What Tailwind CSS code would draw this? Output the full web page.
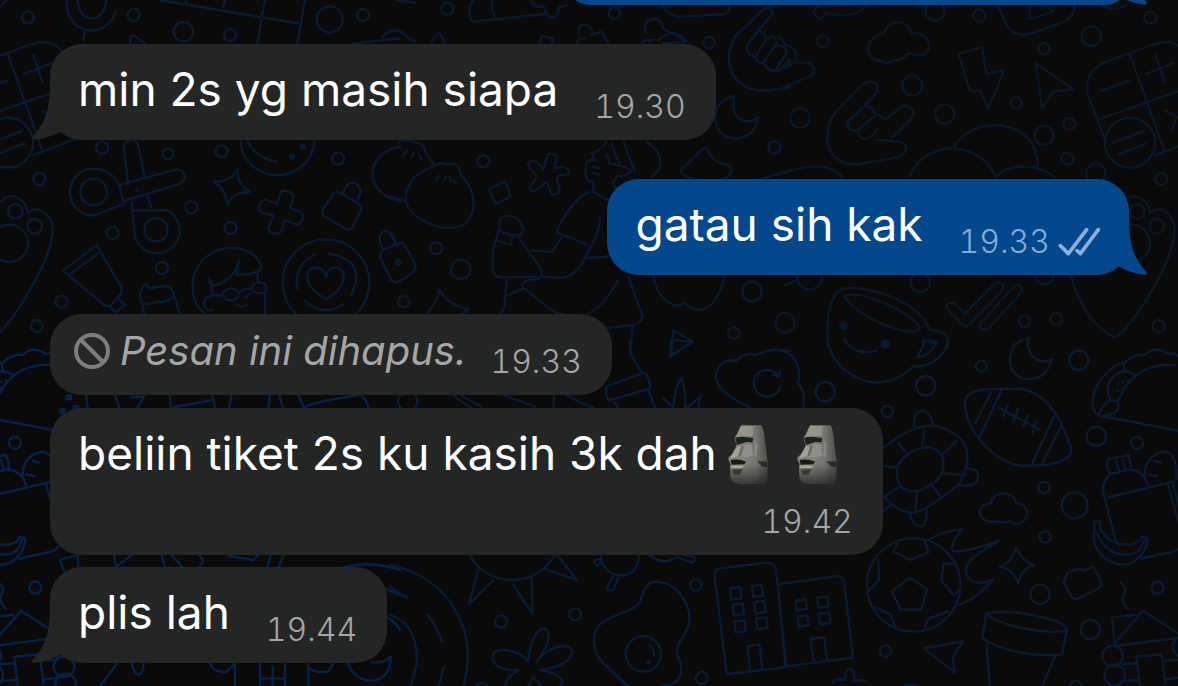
<!DOCTYPE html>
<html lang="id">
<head>
<meta charset="utf-8">
<meta name="viewport" content="width=device-width, initial-scale=1">
<title>Chat</title>
<script src="https://cdn.jsdelivr.net/npm/@tailwindcss/browser@4"></script>
</head>
<body class="bg-[#0a0a0a]">
<main class="relative min-h-screen overflow-hidden bg-[#0a0a0a] font-['Inter','Liberation_Sans',sans-serif] text-white">

<!-- Doodle wallpaper -->
<svg class="absolute top-0 left-0 h-[686px] w-[1178px]" viewBox="0 0 1178 686" fill="none" stroke="currentColor" stroke-width="7" stroke-linecap="round" stroke-linejoin="round" aria-hidden="true">
  <defs>
    <g id="edge-top" transform="translate(778 0) scale(.33333)">
      <circle cx="1116" cy="53" r="18"/><circle cx="1150" cy="537" r="18"/><circle cx="1142" cy="978" r="18"/>
      <path d="M983 425L930 285Q915 215 985 185L1120 135Q1190 110 1220 157L1290 350Q1310 400 1245 422L1133 465M1055 160L1160 455M965 357L1245 258M970 273L1053 242M1103 222L1187 190M1132 165L1160 247M1160 333L1210 357M1180 393L1196 352"/>
      <circle cx="1056" cy="428" r="75"/>
      <path d="M1005 428L1095 394M1020 464L1104 431"/>
      <circle cx="1078" cy="634" r="22"/><circle cx="1136" cy="679" r="22"/><circle cx="1060" cy="730" r="56"/>
      <path d="M875 815C905 930 960 990 1010 1012C1060 990 1190 780 1190 690C1190 640 1140 610 1115 640C1110 590 1060 575 1035 605"/>
    </g>
    <g id="edge-bottom" transform="translate(778 340) scale(.33333)">
      <path d="M960 228C930 200 945 145 975 110Q1010 70 1040 68Q1070 40 1100 45Q1130 15 1170 42Q1190 35 1210 55M1040 68Q1035 85 1045 95M1070 105Q1050 90 1030 95C980 115 985 160 1000 180L1020 185M960 228C980 180 1000 175 1020 185Q1030 225 970 228L1200 272M1020 185C1050 110 1100 70 1190 75"/>
      <path d="M1019 130v3M1036 124v3M1019 150v3M1036 144v3M1050 120v3"/>
      <circle cx="1077" cy="309" r="18"/>
      <path d="M990 358L1050 345Q1062 370 1057 388L998 402Q982 385 990 358ZM1015 365L1022 390M1035 360L1042 384M998 402Q965 430 980 475L1015 610M1057 388Q1100 395 1110 435M1100 408Q1100 345 1160 335Q1200 340 1195 420M1130 362L1148 368M1110 403L1135 408M983 474L1185 425M1170 432L1205 560M1185 425L1220 580Q1215 630 1180 636L1090 656"/>
      <path d="M948 545L966 545L966 567Q1000 620 1060 613Q1090 605 1090 590L1108 595Q1105 650 1050 673C980 680 935 620 950 572ZM955 575Q990 660 1070 640Q1090 630 1098 600"/>
      <circle cx="1138" cy="743" r="18"/>
      <path d="M1027 727Q1050 745 1038 760Q1025 780 1050 807M1010 910L1002 832L1070 825M1010 910L1095 812L1200 880M1010 918L1205 893"/>
      <circle cx="1004" cy="948" r="31"/><circle cx="1010" cy="1005" r="31"/><circle cx="1215" cy="920" r="31"/>
      <path d="M1034 972L1075 970M1040 1022L1085 1020M1085 1038L1075 950L1150 943L1163 1030M1160 962L1200 960M1163 1018L1205 1013"/>
    </g>
  </defs>

  <use href="#edge-top" class="text-[#07182b]"/>
  <use href="#edge-top" x="-1122" class="text-[#071b35]"/>
  <use href="#edge-bottom" class="text-[#081b33]"/>
  <use href="#edge-bottom" x="-1122" class="text-[#05224a]"/>

  <!-- Upper left -->
  <g class="text-[#071b35]" transform="scale(.33333)">
    <circle cx="401" cy="45" r="18"/><circle cx="550" cy="95" r="29"/><circle cx="690" cy="105" r="18"/><circle cx="989" cy="58" r="39"/><circle cx="1089" cy="45" r="18"/><circle cx="306" cy="443" r="18"/><circle cx="504" cy="461" r="16"/><circle cx="665" cy="454" r="18"/><circle cx="1014" cy="476" r="18"/><circle cx="574" cy="622" r="18"/><circle cx="691" cy="684" r="18"/><circle cx="338" cy="699" r="18"/><circle cx="486" cy="804" r="18"/><circle cx="184" cy="905" r="18"/>
    <path d="M0 20L20 0M200 0Q200 85 275 92Q335 85 347 30M233 0Q235 52 275 56Q315 50 319 0M255 92L250 122M390 130Q388 95 410 112L435 130M480 0L895 70M675 0L670 20M795 0L772 130M915 0L892 130M555 0L560 8M1060 130L1200 115M1145 112Q1165 90 1200 92"/>
    <path d="M722 420A110 105 0 0 0 943 420M740 420Q765 475 832 485"/>
    <circle cx="908" cy="440" r="6" fill="currentColor"/><circle cx="876" cy="470" r="6" fill="currentColor"/>
    <!-- Scissors -->
    <path d="M385 553L372 450Q370 420 393 420Q412 420 416 440L433 530M358 555L530 508Q556 510 554 535Q550 548 535 553L365 605M358 555Q330 505 280 506A70 70 0 0 0 280 647L372 612L358 555M395 607L403 690A68 68 0 1 0 500 630L400 632M443 590L453 622"/>
    <circle cx="281" cy="576" r="40"/><circle cx="468" cy="689" r="35"/><circle cx="410" cy="570" r="2"/>
    <path d="M712 507Q712 555 750 576Q700 575 682 614Q680 570 642 545Q695 545 712 507Z"/>
    <path d="M842 578Q850 570 860 573L872 577Q882 582 880 592L870 625L900 635Q912 640 909 652L903 667Q897 675 885 672L855 660L843 695Q838 704 826 701L812 697Q803 692 806 682L820 647L787 638Q775 632 778 620L784 605Q790 598 800 600L832 612Z"/>
    <path d="M1000 580L967 630Q965 645 975 650L1038 687Q1050 692 1057 682L1084 630Q1085 618 1076 612L1018 577Q1006 573 1000 580ZM1030 580C1040 535 1080 545 1081 570Q1082 585 1070 605"/>
    <path d="M1200 440C1090 460 1090 580 1200 605"/>
    <!-- Tube, hat and face -->
    <path d="M290 735L190 812L312 915Q320 922 330 918L362 882Q368 872 363 860ZM298 757L208 825M353 895L376 915L345 937L328 917"/>
    <path d="M433 942L420 885Q422 865 438 850Q445 870 465 862L495 858Q520 860 523 890L540 942M428 910Q450 915 470 905Q500 910 523 890"/>
    <path d="M590 915C550 830 610 740 700 744Q770 750 785 803Q755 830 710 823L717 782Q700 845 640 857L627 838L640 885M785 803L770 823L778 850M795 880V942M590 915L615 942"/>
    <ellipse cx="692" cy="883" rx="23" ry="18"/><ellipse cx="778" cy="864" rx="22" ry="16"/>
    <path d="M670 885L640 887Q610 890 612 915Q620 935 638 930M715 880Q735 860 755 868M735 890Q747 885 750 880M708 912Q720 925 740 914"/>
    <circle cx="978" cy="848" r="130"/>
    <path d="M978 897C900 855 915 800 950 803Q970 805 978 830Q985 800 1010 803C1045 810 1040 865 978 897ZM943 765Q880 800 891 865M985 760Q1085 780 1066 850L1055 885M913 902Q970 955 1032 911"/>
    <path d="M1145 740C1125 690 1165 680 1182 712L1190 735M1155 745L1200 732M1155 745Q1138 755 1142 775L1172 835Q1182 850 1200 845"/>
  </g>

  <!-- Upper centre -->
  <g class="text-[#071a32]" transform="translate(390 0) scale(.33333)">
    <circle cx="172" cy="26" r="18"/><circle cx="673" cy="39" r="17"/><circle cx="957" cy="128" r="17"/><circle cx="1153" cy="442" r="18"/><circle cx="280" cy="484" r="18"/><circle cx="139" cy="745" r="18"/><circle cx="212" cy="808" r="29"/><circle cx="41" cy="905" r="17"/><circle cx="1086" cy="875" r="29"/><circle cx="1031" cy="999" r="17"/>
    <path d="M20 0L75 8M240 15Q235 60 250 65L465 42M305 0Q305 45 320 58M240 15L250 0M425 0Q430 25 462 20Q470 52 487 52Q507 50 507 22L530 15M0 92Q40 88 55 115L75 125M125 125Q140 95 150 100L165 130M450 130L455 108L490 115L485 130M562 130Q560 115 585 115M600 105L635 95L655 128M565 100C560 65 600 65 607 95M755 128Q760 120 790 120M805 122Q850 75 890 125L820 130M768 100C750 50 815 40 818 85L885 122M820 18Q830 50 880 50L1005 42Q1020 35 1018 18"/>
    <!-- Hands -->
    <path d="M1148 40Q1145 20 1125 24L1035 110C990 190 1030 275 1130 272L1200 262M1148 40L1075 130Q1065 165 1095 170L1130 115Q1110 70 1085 120M1095 170Q1105 192 1120 188L1160 130Q1155 100 1135 115M1120 188Q1135 215 1155 212L1190 160Q1185 130 1160 140M1155 212Q1175 210 1200 185"/>
    <path d="M1034 288C950 300 960 420 1040 415Q1095 410 1105 353Q1080 370 1055 360Q1020 340 1034 288Z"/>
    <path d="M875 508Q870 520 880 525L905 535M875 508L940 445Q950 440 955 455Q970 490 1015 495Q1030 505 1020 525L1005 535M1120 535L1200 510"/>
    <!-- Dumplings -->
    <path d="M25 427Q50 415 75 427Q105 430 105 455L135 497M40 466L52 452M65 472L72 460M95 480L88 465M0 588L48 605M137 497Q150 485 170 493Q195 485 210 505L210 520C260 570 265 645 220 675C160 700 60 660 48 605Q40 530 137 497ZM139 540L150 525M163 542L168 530M178 530L182 545M190 540L198 553"/>
    <path d="M480 461Q500 460 498 480L493 505L520 500Q540 505 535 520Q530 525 505 527L500 535L510 570Q500 590 485 580L470 545L440 570Q420 580 420 560L440 530L420 505Q405 485 430 482Q440 482 460 507L470 475Q470 462 480 461Z"/>
    <path d="M297 567L345 544L363 590L317 611Z"/>
    <!-- Runner -->
    <path d="M650 420Q640 450 605 460L615 480L592 482Q580 520 595 542L610 548V575L640 595L660 600M610 500L628 505M610 520L628 525M650 465Q660 480 655 490Q720 500 725 515Q700 530 680 528L668 550L680 570M665 430Q675 470 690 490M700 420Q720 480 735 515M770 425C810 450 830 500 785 530M600 575C560 590 510 660 500 697L590 733M630 650C630 700 600 740 585 775Q560 825 520 833L430 830M515 712L487 755L420 752M580 775L655 770"/>
    <path d="M330 675C320 640 385 640 390 668Q410 690 390 705Q330 700 325 690ZM325 695L318 720L360 735L370 710L355 705M318 720Q305 750 308 810Q312 830 330 832L440 830M385 712L455 810Q460 840 435 838Q390 840 400 862L470 920Q500 945 520 942M350 840L343 920L332 942M343 890L400 865M683 840Q650 910 590 945M715 830L758 950Q755 970 730 975L640 985M730 975L722 1040M790 825Q800 900 860 918L885 910Q900 925 930 930Q980 925 1005 825"/>
    <path d="M0 700L15 727M0 740L35 727Q48 735 78 800Q75 820 20 848L0 840"/>
    <circle cx="25" cy="787" r="7" fill="currentColor"/>
    <path d="M112 940Q145 900 148 870Q180 920 238 927L215 942M850 990L908 1025L845 1065Z"/>
  </g>

  <!-- Upper right -->
  <g class="text-[#07182b]" transform="translate(778 0) scale(.33333)">
    <circle cx="471" cy="32" r="29"/><circle cx="604" cy="47" r="18"/><circle cx="134" cy="123" r="17"/><circle cx="940" cy="109" r="29"/><circle cx="798" cy="146" r="17"/><circle cx="403" cy="257" r="30"/><circle cx="500" cy="342" r="29"/><circle cx="66" cy="354" r="29"/><circle cx="715" cy="309" r="17"/><circle cx="798" cy="406" r="29"/><circle cx="874" cy="372" r="18"/><circle cx="868" cy="476" r="18"/><circle cx="953" cy="520" r="29"/><circle cx="95" cy="830" r="38"/><circle cx="427" cy="847" r="29"/><circle cx="800" cy="825" r="28"/><circle cx="740" cy="964" r="17"/><circle cx="835" cy="957" r="18"/><circle cx="21" cy="968" r="29"/>
    <path d="M115 20L105 40L128 58L145 38M140 38Q220 60 265 18M660 18L690 80Q710 110 750 103L860 65Q890 45 890 18M755 18V58L827 35L810 22M975 18Q1010 35 1045 15"/>
    <path d="M318 100C330 55 390 55 400 100C450 90 475 150 430 168L390 160Q370 185 350 180C330 190 315 190 310 182C260 185 255 110 318 100Z"/>
    <path d="M542 162L613 141L625 220L678 213L630 327L608 272H575ZM773 190L885 267L825 275L792 325Z"/>
    <path d="M0 110Q15 115 20 135Q50 135 55 165Q55 190 20 205M55 188L90 188Q115 195 105 225L0 270M0 215L35 177"/>
    <path d="M298 275Q305 250 280 246Q260 245 245 262L165 345C125 430 160 500 245 492L355 473Q385 465 385 442Q385 428 360 425L298 420M298 275L260 318L210 365Q205 385 220 390L240 390L290 348Q295 335 320 360L370 320Q400 315 408 340Q405 355 340 415M260 318Q290 320 290 348M240 390Q240 415 260 418Q275 418 298 388"/>
    <path d="M395 530C430 430 590 405 655 530C690 490 780 490 830 532M525 445C580 340 780 350 780 500M0 525Q140 470 195 532"/>
    <!-- Tick marks and cup -->
    <path d="M505 925Q500 910 525 908L562 940L645 855Q660 840 675 855Q678 865 670 875L572 975Q563 980 552 973ZM610 968L705 862Q722 845 733 865Q735 872 727 880L632 985Q615 995 605 980ZM20 855L50 843"/>
    <path d="M150 1035Q140 900 190 867C260 850 420 900 455 990Q520 990 508 1045M200 890C220 860 400 930 427 985C420 1020 240 960 200 890ZM435 1035L445 1020L475 1025M198 1015Q205 1030 215 1035M705 1035Q730 1020 755 1012L750 1030"/>
    <circle cx="196" cy="977" r="10" fill="currentColor"/><circle cx="322" cy="1030" r="9" fill="currentColor"/>
  </g>

  <!-- Lower left -->
  <g class="text-[#05224a]" transform="translate(0 340) scale(.33333)">
    <circle cx="207" cy="172" r="7" fill="currentColor"/><circle cx="187" cy="213" r="7" fill="currentColor"/><circle cx="228" cy="204" r="7" fill="currentColor"/>
    <path d="M258 165L263 203M345 165L358 203M392 172L432 170L412 203M510 165L512 203L640 180L637 165M640 180L645 203M695 165L687 203M810 165L805 203M838 165L848 203M895 165L912 203Q940 185 1080 165Q1100 175 1105 203"/>
    <path d="M195 700L180 660L233 645L235 680M342 645L348 680L395 645M485 645L495 680M515 645L545 680M595 645Q620 660 600 678M685 648L760 660L775 645M803 680L812 645M838 680L850 645M1030 682Q1110 660 1200 690M1155 745L1200 765M1160 830Q1190 850 1200 870"/>
    <path d="M395 968Q400 1000 415 1005Q432 1000 430 970M300 1038L352 970M630 970Q640 1000 680 995L705 970V1038M780 970V1038M855 970V1038M818 980V1038M780 1015H855M925 975V1038M925 985Q950 1000 985 995L1000 970M1045 970C1060 1035 1175 1050 1172 950Q1145 975 1115 965"/>
    <circle cx="192" cy="980" r="31"/><circle cx="197" cy="1032" r="31"/>
  </g>

  <!-- Lower centre -->
  <g class="text-[#061c38]" transform="translate(390 340) scale(.33333)">
    <circle cx="53" cy="184" r="29"/><circle cx="917" cy="735" r="17"/><circle cx="555" cy="823" r="18"/><circle cx="333" cy="845" r="18"/><circle cx="935" cy="1014" r="18"/>
    <path d="M720 0L722 42L755 95M648 140L765 97Q775 105 782 145L655 182Q645 160 648 140ZM672 185L682 203M775 150L795 203M190 165Q210 185 245 203M215 168L275 200M340 165L435 200M493 165L490 203M530 165Q570 190 610 203M820 175L850 203M850 203Q855 140 875 113Q890 160 885 203M892 203L930 170L925 203M845 0L908 5L840 50Z"/>
    <path d="M1080 203C1000 165 960 125 985 85Q1000 55 1040 62Q1060 35 1100 45Q1140 20 1200 35M1165 108A40 40 0 1 0 1170 140M1150 105L1170 108V92"/>
    <path d="M240 645C290 745 440 745 495 645M265 688L237 792L310 720M368 732L428 822L425 715M467 688L562 720L502 645"/>
    <path d="M633 645C635 720 745 735 747 645M612 665Q620 655 633 658Q632 672 620 677ZM668 710L650 745Q660 758 672 747L685 712M780 645Q820 680 860 650L905 668Q920 660 912 650L880 645"/>
    <path d="M0 675C180 710 270 880 220 1038M0 825C80 850 100 950 60 1038M0 740L53 775M113 825Q140 860 155 903M160 980Q155 1015 145 1038M0 960V990"/>
    <path d="M415 965C420 900 440 870 460 865C490 870 475 920 440 965C470 920 535 905 545 930C550 970 490 985 450 990C500 1000 530 1020 510 1038M415 965C390 930 310 915 307 950C310 985 345 990 385 992Q350 1010 345 1038M415 1038L430 1010L455 1038M260 1035Q275 1020 292 1035"/>
    <path d="M795 725C860 725 905 790 897 850C890 890 855 900 862 945C890 1000 860 1038 830 1035L765 1050C700 1045 700 1020 640 970C605 935 600 870 640 845C690 815 740 810 750 785C760 750 770 727 795 725Z"/>
    <circle cx="760" cy="942" r="53"/><path d="M778 915Q795 930 792 947"/><circle cx="776" cy="966" r="3"/>
    <path d="M1010 1002L975 715Q970 690 990 685L1130 668Q1155 668 1158 692L1190 982ZM1020 745L1050 741L1055 775L1023 779ZM1086 738L1115 734L1120 767L1089 771ZM1028 794L1058 790L1062 823L1031 827ZM1093 787L1123 783L1127 816L1096 820ZM1033 845L1063 841L1068 874L1037 878ZM1098 836L1129 832L1133 864L1102 868ZM1080 990L1072 920L1108 913L1117 985M1163 740Q1170 730 1200 728"/>
  </g>

  <!-- Lower right -->
  <g class="text-[#081b33]" transform="translate(778 340) scale(.33333)">
    <circle cx="142" cy="155" r="29"/><circle cx="443" cy="137" r="29"/><circle cx="328" cy="214" r="17"/><circle cx="610" cy="78" r="17"/><circle cx="902" cy="61" r="29"/><circle cx="955" cy="289" r="29"/><circle cx="798" cy="443" r="17"/><circle cx="890" cy="496" r="39"/><circle cx="801" cy="591" r="17"/><circle cx="786" cy="763" r="29"/><circle cx="937" cy="869" r="29"/><circle cx="322" cy="933" r="17"/><circle cx="893" cy="1040" r="18"/>
    <path d="M148 0C165 90 250 130 300 127Q360 125 405 80C470 80 505 40 510 0M200 0Q230 50 298 32M435 0C445 20 420 35 418 52Q450 50 475 10L450 5M0 30C60 40 70 90 60 130Q85 155 75 203M0 110L8 92M0 155L6 140"/>
    <circle cx="321" cy="13" r="10" fill="currentColor"/>
    <path d="M730 0C670 40 695 120 755 118Q805 115 822 58Q800 70 775 58Q745 35 750 0"/>
    <!-- Football -->
    <path d="M560 190C560 140 650 145 725 147C820 155 860 270 880 325C880 370 820 375 740 378C640 370 560 260 560 190ZM640 155L592 250M672 147L605 290M828 230L762 372M848 262L793 370M662 203L783 268M690 193L675 230M720 207L706 247M750 225L735 263M775 240L763 280"/>
    <!-- Turtle -->
    <path d="M318 322Q420 240 490 262Q590 300 563 385L545 430Q450 510 410 518Q360 520 318 470M408 262C400 200 460 195 463 253M568 385Q605 385 600 415Q590 445 545 435M395 520Q405 565 435 558Q447 545 445 505M318 512L338 495M357 400C355 350 420 320 450 322C490 325 505 360 493 395C480 430 430 460 390 452Q355 440 357 400ZM440 262L432 320M535 303L492 345M495 400L563 405M457 430L488 470M417 455L412 515M365 440L322 468M358 382L318 378M390 345L360 308"/>
    <path d="M640 490C640 455 705 445 715 490C750 485 760 540 725 550Q710 555 695 543Q680 550 665 545C590 555 590 490 640 490Z"/>
    <!-- Ball -->
    <circle cx="407" cy="735" r="140"/>
    <path d="M396 713L447 747L430 809H367L342 753ZM360 605L347 635L397 660L452 637L440 603M300 660L303 720L270 755M530 672L497 670L490 723L527 765L545 750M290 800L340 825L352 860M440 862L453 835L510 815M450 600Q500 570 553 568Q515 610 525 633Q560 640 663 602C580 650 560 670 565 700Q580 745 645 718Q600 775 543 795"/>
    <path d="M715 622Q730 665 770 675Q730 685 720 730Q705 685 665 680Q705 665 715 622ZM857 725L870 697L905 685Q910 695 920 690L945 682Q955 685 970 735Q970 745 900 775Q885 780 880 770Z"/>
    <path d="M0 733L180 708Q195 710 198 725L225 953L0 983M0 735L22 978M53 782L83 778L87 807L56 811ZM118 773L148 769L152 799L121 803ZM58 830L89 826L92 856L62 860ZM122 822L154 818L158 849L126 853ZM107 962L98 897L138 891L147 957"/>
    <path d="M438 925L555 905L525 950L530 998ZM165 1030Q160 1015 200 1020Q200 985 218 987Q232 995 228 1020L262 1022M380 1035H410"/>
    <path d="M625 820C690 805 860 835 867 868C850 890 650 860 625 820L613 895C690 945 800 950 853 943L867 868M625 907L635 1038M832 948L792 1038"/>
  </g>
</svg>

<ul class="relative flex flex-col items-start pr-[49px] pl-[50px]">
  <li class="relative h-[5px] w-[563px] self-end" aria-hidden="true">
    <div class="absolute inset-x-0 bottom-0 h-12 rounded-[32px] bg-[#03478c]"></div>
    <svg class="absolute -right-[18px] bottom-0 h-[67px] w-[50px] text-[#03478c]" viewBox="0 0 150 201" fill="currentColor"><path d="M96 10C96 100 102 140 148 192Q153 200 144 200Q100 196 61 173L0 140V10Z"/></svg>
  </li>

  <li class="relative mt-[39px] flex items-end gap-9 rounded-[32px] bg-[#242626] pt-[17px] pr-[30px] pb-[13px] pl-7">
    <svg class="absolute -left-[18px] bottom-0 h-[67px] w-[50px] text-[#242626]" viewBox="0 0 150 201" fill="currentColor" aria-hidden="true"><path d="M54 10C54 100 48 140 2 192Q-3 200 6 200Q50 196 89 173L150 140V10Z"/></svg>
    <p class="relative mb-2.5 text-[46px] leading-[56px] whitespace-nowrap">min 2s yg masih siapa</p>
    <time class="text-[32px] leading-10 font-light text-[#a5a6a6] tabular-nums">19.30</time>
  </li>

  <li class="relative mt-[39px] flex items-end gap-9 self-end rounded-[32px] bg-[#03478c] pt-[17px] pr-7 pb-[13px] pl-7">
    <svg class="absolute -right-[18px] bottom-0 h-[67px] w-[50px] text-[#03478c]" viewBox="0 0 150 201" fill="currentColor" aria-hidden="true"><path d="M96 10C96 100 102 140 148 192Q153 200 144 200Q100 196 61 173L0 140V10Z"/></svg>
    <p class="mb-2.5 text-[46px] leading-[56px] whitespace-nowrap">gatau sih kak</p>
    <div class="relative flex items-center gap-2 text-[#8bb0dc]">
      <time class="text-[32px] leading-10 font-light text-[#86abd6] tabular-nums">19.33</time>
      <svg class="h-[30px] w-[43px]" viewBox="0 0 129 90" fill="none" stroke="currentColor" stroke-width="11" stroke-linecap="round" stroke-linejoin="round" role="img" aria-label="Terkirim"><path d="M7 56L31 80L86 8M57 71L67 80L121 8"/></svg>
    </div>
  </li>

  <li class="mt-[39px] flex items-end gap-6 rounded-[32px] bg-[#242626] pt-3 pr-[30px] pb-[13px] pl-6">
    <div class="mb-[7px] flex items-center gap-2.5">
      <svg class="size-9 text-[#7c7d7d]" viewBox="0 0 36 36" fill="none" stroke="currentColor" stroke-width="4" aria-hidden="true"><circle cx="18" cy="18" r="16"/><path d="M7 7L29 29"/></svg>
      <p class="text-[40px] leading-[49px] whitespace-nowrap text-[#a5a6a6] italic">Pesan ini dihapus.</p>
    </div>
    <time class="text-[32px] leading-10 font-light text-[#a5a6a6] tabular-nums">19.33</time>
  </li>

  <li class="mt-[13px] flex flex-col rounded-[32px] bg-[#242626] pt-[17px] pr-[30px] pb-[13px] pl-7">
    <p class="flex text-[46px] leading-[56px] whitespace-nowrap">beliin tiket 2s ku kasih 3k dah
      <svg class="mr-[27px] ml-2.5 h-[60px] w-[42px]" viewBox="0 0 126 180" role="img" aria-label="moai">
        <defs>
          <linearGradient id="stone" x1="0" x2="1"><stop offset="0" stop-color="#7f7e6d"/><stop offset=".4" stop-color="#82827b"/><stop offset=".7" stop-color="#74756e"/><stop offset="1" stop-color="#4b4c46"/></linearGradient>
          <linearGradient id="shade" x1="0" x2="0" y1="0" y2="1"><stop offset=".65" stop-color="#222" stop-opacity="0"/><stop offset="1" stop-color="#1c1d1a" stop-opacity=".75"/></linearGradient>
          <filter id="soft"><feGaussianBlur stdDeviation="2"/></filter>
          <symbol id="moai" viewBox="0 0 126 180">
            <path fill="url(#stone)" d="M42 1H104Q112 18 114 48L122 112L121 160Q120 174 104 177L42 176Q14 175 11 160L9 128L11 118L4 104Q3 94 14 90L29 61L23 42Q22 34 28 31Z"/>
            <path fill="url(#shade)" d="M42 1H104Q112 18 114 48L122 112L121 160Q120 174 104 177L42 176Q14 175 11 160L9 128L11 118L4 104Q3 94 14 90L29 61L23 42Q22 34 28 31Z"/>
            <g filter="url(#soft)">
              <path fill="#a09e8c" d="M42 4H80L77 32L27 35Z" opacity=".7"/>
              <path fill="#1f211d" d="M24 38Q50 32 79 40L76 53Q60 48 48 55L30 60Z"/>
              <path fill="#8e8f8c" d="M50 60L74 58L78 92L54 98L32 92Z"/>
              <path fill="#a3a191" d="M14 90L33 62L42 66L32 94L9 102Z"/>
              <path fill="#5b5c54" d="M44 60L50 66L42 92L34 94Z" opacity=".7"/>
              <path fill="#1b1d19" d="M11 105Q35 100 58 110L52 118L14 119Z"/>
              <path fill="#aaa78f" d="M9 122Q30 118 54 124L43 130L13 129Z"/>
              <path fill="#2f302a" d="M15 134L47 132L38 149L20 149Z" opacity=".8"/>
              <path fill="#1f201b" d="M91 108L121 110V127L104 124Z" opacity=".8"/>
              <path fill="#9b9a88" d="M84 44L92 60L88 100L82 92Z" opacity=".5"/>
            </g>
          </symbol>
        </defs>
        <use href="#moai" width="126" height="180"/>
      </svg>
      <svg class="mr-[15px] h-[60px] w-[42px]" viewBox="0 0 126 180" role="img" aria-label="moai"><use href="#moai" width="126" height="180"/></svg>
    </p>
    <time class="mt-[17px] self-end text-[32px] leading-10 font-light text-[#a5a6a6] tabular-nums">19.42</time>
  </li>

  <li class="relative mt-3 flex items-end gap-9 rounded-[32px] bg-[#242626] pt-[17px] pr-[30px] pb-[13px] pl-7">
    <svg class="absolute -left-[18px] bottom-0 h-[67px] w-[50px] text-[#242626]" viewBox="0 0 150 201" fill="currentColor" aria-hidden="true"><path d="M54 10C54 100 48 140 2 192Q-3 200 6 200Q50 196 89 173L150 140V10Z"/></svg>
    <p class="relative mb-2.5 text-[46px] leading-[56px] whitespace-nowrap">plis lah</p>
    <time class="text-[32px] leading-10 font-light text-[#a5a6a6] tabular-nums">19.44</time>
  </li>
</ul>
</main>
</body>
</html>
